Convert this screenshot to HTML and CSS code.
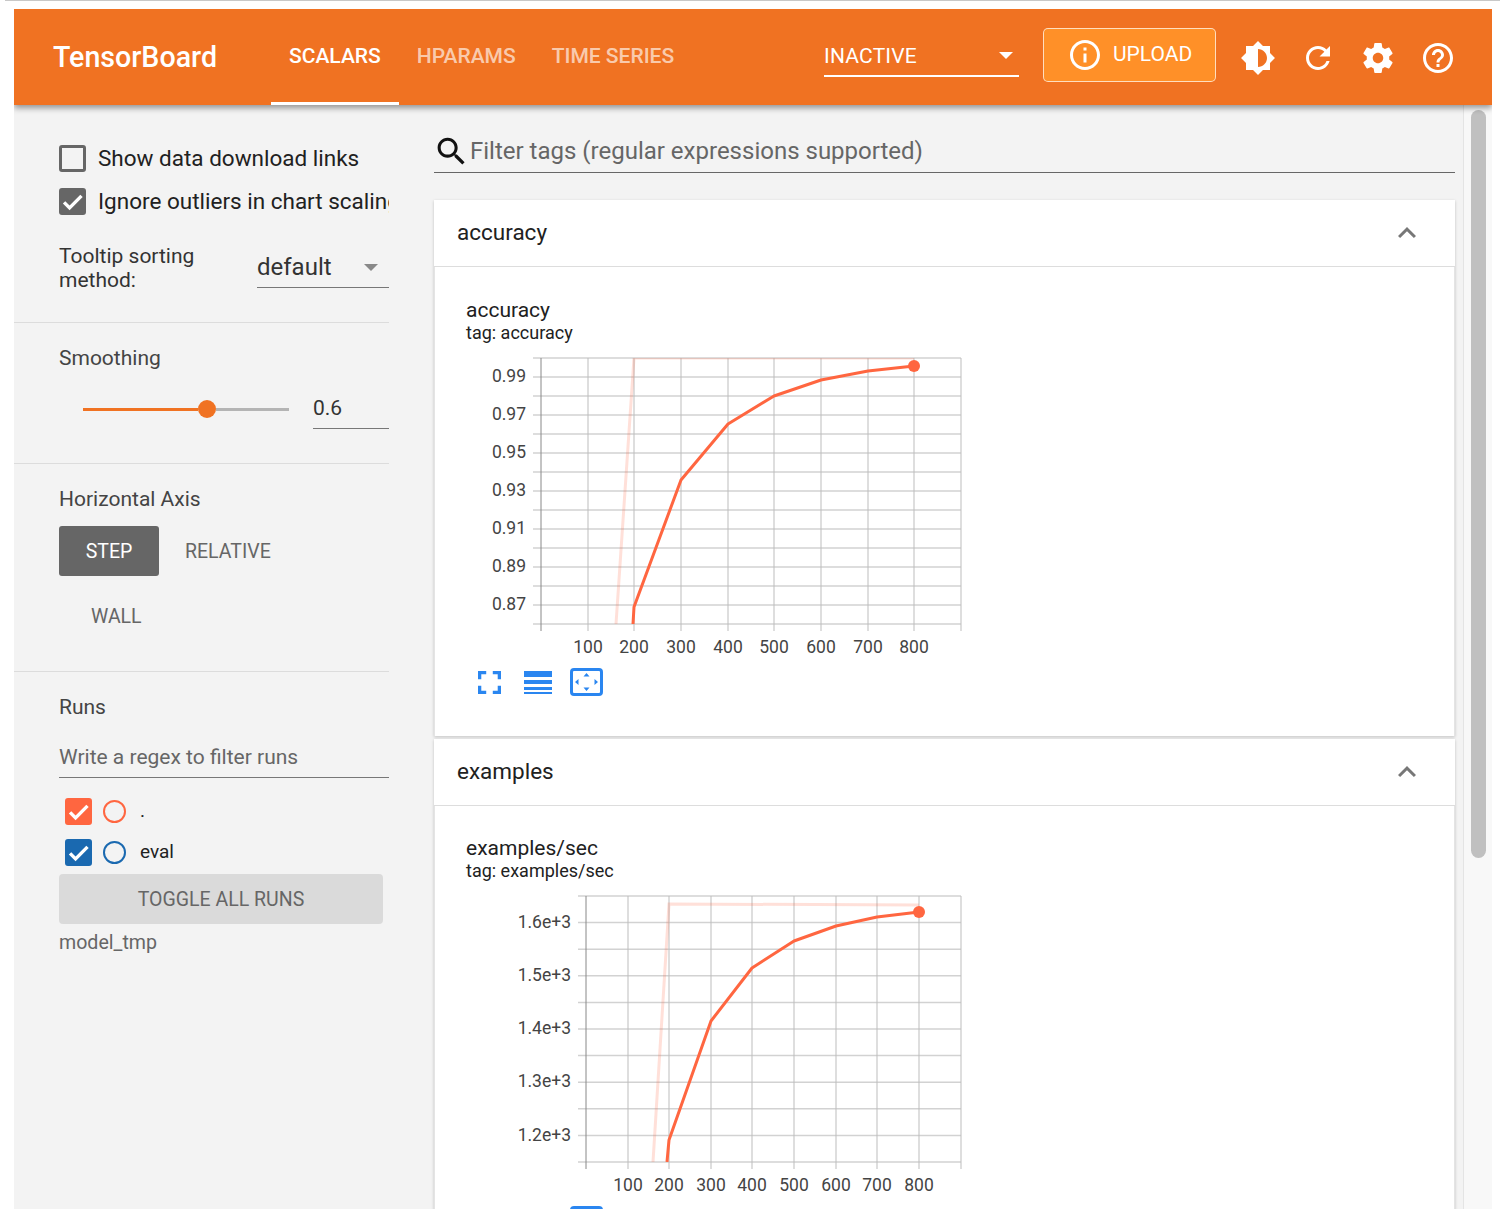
FILE: index.html
```html
<!DOCTYPE html>
<html>
<head>
<meta charset="utf-8">
<title>TensorBoard</title>
<link rel="stylesheet" href="styles.css">
</head>
<body>
<div class="topline"></div>
<div class="frame">
  <header class="topbar">
    <div class="brand">TensorBoard</div>
    <nav class="tabs">
      <a class="tab active">SCALARS</a>
      <a class="tab">HPARAMS</a>
      <a class="tab">TIME SERIES</a>
    </nav>
    <div class="plugin-select">
      <span>INACTIVE</span>
      <i class="caret"></i>
    </div>
    <button class="upload">
      <svg class="icon-36" viewBox="0 0 24 24"><path d="M11 17h2v-6h-2v6zm1-15C6.48 2 2 6.48 2 12s4.48 10 10 10 10-4.48 10-10S17.52 2 12 2zm0 18c-4.41 0-8-3.59-8-8s3.59-8 8-8 8 3.59 8 8-3.59 8-8 8zM11 9h2V7h-2v2z"/></svg>
      <span class="upload-text">UPLOAD</span>
    </button>
    <div class="actions">
      <svg class="icon-36" viewBox="0 0 24 24"><path d="M20 15.31L23.31 12 20 8.69V4h-4.69L12 .69 8.69 4H4v4.69L.69 12 4 15.31V20h4.69L12 23.31 15.31 20H20v-4.69zM12 18V6c3.31 0 6 2.69 6 6s-2.69 6-6 6z"/></svg>
      <svg class="icon-36" viewBox="0 0 24 24"><path d="M17.65 6.35C16.2 4.9 14.21 4 12 4c-4.42 0-7.99 3.58-7.99 8s3.57 8 7.99 8c3.73 0 6.84-2.55 7.73-6h-2.08c-.82 2.33-3.04 4-5.65 4-3.31 0-6-2.69-6-6s2.69-6 6-6c1.66 0 3.14.69 4.22 1.78L13 11h7V4l-2.35 2.35z"/></svg>
      <svg class="icon-36" viewBox="0 0 24 24"><path d="M19.43 12.98c.04-.32.07-.64.07-.98s-.03-.66-.07-.98l2.11-1.65c.19-.15.24-.42.12-.64l-2-3.46c-.12-.22-.39-.3-.61-.22l-2.49 1c-.52-.4-1.08-.73-1.69-.98l-.38-2.65C14.46 2.18 14.25 2 14 2h-4c-.25 0-.46.18-.49.42l-.38 2.65c-.61.25-1.17.59-1.69.98l-2.49-1c-.23-.09-.49 0-.61.22l-2 3.46c-.13.22-.07.49.12.64l2.11 1.65c-.04.32-.07.65-.07.98s.03.66.07.98l-2.11 1.65c-.19.15-.24.42-.12.64l2 3.46c.12.22.39.3.61.22l2.49-1c.52.4 1.08.73 1.69.98l.38 2.65c.03.24.24.42.49.42h4c.25 0 .46-.18.49-.42l.38-2.65c.61-.25 1.17-.59 1.69-.98l2.49 1c.23.09.49 0 .61-.22l2-3.46c.12-.22.07-.49-.12-.64l-2.11-1.65zM12 15.5c-1.93 0-3.5-1.57-3.5-3.5s1.57-3.5 3.5-3.5 3.5 1.57 3.5 3.5-1.57 3.5-3.5 3.5z"/></svg>
      <svg class="icon-36" viewBox="0 0 24 24"><path d="M11 18h2v-2h-2v2zm1-16C6.48 2 2 6.48 2 12s4.48 10 10 10 10-4.48 10-10S17.52 2 12 2zm0 18c-4.41 0-8-3.59-8-8s3.59-8 8-8 8 3.59 8 8-3.59 8-8 8zm0-14c-2.21 0-4 1.79-4 4h2c0-1.1.9-2 2-2s2 .9 2 2c0 2-3 1.75-3 5h2c0-2.25 3-2.5 3-5 0-2.21-1.79-4-4-4z"/></svg>
    </div>
  </header>

  <div class="content">
    <aside class="sidebar">
      <section class="side-section settings">
        <label class="check-row">
          <span class="box"></span>
          <span class="check-label">Show data download links</span>
        </label>
        <label class="check-row">
          <span class="box checked"><svg viewBox="0 0 24 24"><path d="M4.5 12.8l4.9 4.9L20 7"/></svg></span>
          <span class="check-label">Ignore outliers in chart scaling</span>
        </label>
        <div class="sort-row">
          <div class="sort-label">Tooltip sorting method:</div>
          <div class="sort-select"><span>default</span><i class="caret grey"></i></div>
        </div>
      </section>

      <section class="side-section smoothing">
        <div class="side-title">Smoothing</div>
        <div class="slider-row">
          <div class="slider">
            <div class="slider-fill"></div>
            <div class="slider-thumb"></div>
            <div class="slider-rest"></div>
          </div>
          <div class="slider-value">0.6</div>
        </div>
      </section>

      <section class="side-section axis">
        <div class="side-title">Horizontal Axis</div>
        <div class="axis-buttons">
          <button class="axis-btn selected">STEP</button>
          <button class="axis-btn">RELATIVE</button>
          <button class="axis-btn wall">WALL</button>
        </div>
      </section>

      <section class="side-section runs">
        <div class="side-title">Runs</div>
        <div class="runs-filter">Write a regex to filter runs</div>
        <div class="run-list">
          <div class="run">
            <span class="box checked orange"><svg viewBox="0 0 24 24"><path d="M4.5 12.8l4.9 4.9L20 7"/></svg></span>
            <span class="run-dot orange"></span>
            <span class="run-name">.</span>
          </div>
          <div class="run">
            <span class="box checked blue"><svg viewBox="0 0 24 24"><path d="M4.5 12.8l4.9 4.9L20 7"/></svg></span>
            <span class="run-dot blue"></span>
            <span class="run-name">eval</span>
          </div>
        </div>
        <button class="toggle-runs">TOGGLE ALL RUNS</button>
        <div class="logdir">model_tmp</div>
      </section>
    </aside>

    <main class="main">
      <div class="filter">
        <svg class="search-icon" viewBox="0 0 24 24"><path d="M15.5 14h-.79l-.28-.27C15.41 12.59 16 11.11 16 9.5 16 5.91 13.09 3 9.5 3S3 5.91 3 9.5 5.91 16 9.5 16c1.61 0 3.09-.59 4.23-1.57l.27.28v.79l5 4.99L20.49 19l-4.99-5zm-6 0C7.01 14 5 11.99 5 9.5S7.01 5 9.5 5 14 7.01 14 9.5 11.99 14 9.5 14z"/></svg>
        <span>Filter tags (regular expressions supported)</span>
      </div>

      <div class="pane">
        <div class="pane-head">
          <span class="pane-name">accuracy</span>
          <svg class="chevron" viewBox="0 0 24 24"><path d="M12 8l-6 6 1.41 1.41L12 10.83l4.59 4.58L18 14z"/></svg>
        </div>
        <div class="pane-body">
          <div class="chart-title">accuracy</div>
          <div class="chart-tag">tag: accuracy</div>
          <svg class="chart" width="500" height="305" viewBox="0 0 500 305">
            <defs><clipPath id="plot-a"><rect x="67" y="6" width="428" height="266"/></clipPath></defs>
            <path class="grid-h" d="M67 6H495M67 25H495M67 44H495M67 63H495M67 82H495M67 101H495M67 120H495M67 139H495M67 158H495M67 177H495M67 196H495M67 215H495M67 234H495M67 253H495M67 272H495"/>
            <path class="grid-v" d="M122 6V279M168 6V279M215 6V279M262 6V279M308 6V279M355 6V279M402 6V279M448 6V279M495 6V279"/>
            <path class="axis-line" d="M75 6V279"/>
            <g clip-path="url(#plot-a)">
              <polyline class="line-pale" points="150,272 168,6 448,6"/>
              <polyline class="line" points="167,272 168,255 215,128 262,72 308,44 355,28 402,19 448,14"/>
            </g>
            <circle class="dot" cx="448" cy="14" r="6"/>
            <g class="y-labels">
              <text x="60" y="30">0.99</text>
              <text x="60" y="68">0.97</text>
              <text x="60" y="106">0.95</text>
              <text x="60" y="144">0.93</text>
              <text x="60" y="182">0.91</text>
              <text x="60" y="220">0.89</text>
              <text x="60" y="258">0.87</text>
            </g>
            <g class="x-labels">
              <text x="122" y="301">100</text>
              <text x="168" y="301">200</text>
              <text x="215" y="301">300</text>
              <text x="262" y="301">400</text>
              <text x="308" y="301">500</text>
              <text x="355" y="301">600</text>
              <text x="402" y="301">700</text>
              <text x="448" y="301">800</text>
            </g>
          </svg>
          <div class="chart-tools">
            <svg class="tool-full" viewBox="5 5 14 14"><path d="M7 14H5v5h5v-2H7v-3zm-2-4h2V7h3V5H5v5zm12 7h-3v2h5v-5h-2v3zM14 5v2h3v3h2V5h-5z"/></svg>
            <svg class="tool-lines" viewBox="0 0 28 23"><path d="M0 0h28v6H0zM0 9h28v4H0zM0 16h28v3H0zM0 21h28v2H0z"/></svg>
            <svg class="tool-fit" viewBox="0 0 33 28"><rect x="1.5" y="1.5" width="30" height="25" rx="2.5"/><path class="fill" d="M16.5 5l3 3.5h-6zM16.5 23l-3-3.5h6zM5 14l3.5-3v6zM28 14l-3.5 3v-6z"/></svg>
          </div>
        </div>
      </div>

      <div class="pane">
        <div class="pane-head">
          <span class="pane-name">examples</span>
          <svg class="chevron" viewBox="0 0 24 24"><path d="M12 8l-6 6 1.41 1.41L12 10.83l4.59 4.58L18 14z"/></svg>
        </div>
        <div class="pane-body">
          <div class="chart-title">examples/sec</div>
          <div class="chart-tag">tag: examples/sec</div>
          <svg class="chart" width="500" height="305" viewBox="0 0 500 305">
            <defs><clipPath id="plot-b"><rect x="112" y="6" width="383" height="266"/></clipPath></defs>
            <path class="grid-h" d="M112 6H495M112 32.6H495M112 59.2H495M112 85.8H495M112 112.4H495M112 139H495M112 165.6H495M112 192.2H495M112 218.8H495M112 245.4H495M112 272H495"/>
            <path class="grid-v" d="M162 6V279M203 6V279M245 6V279M286 6V279M328 6V279M370 6V279M411 6V279M453 6V279M495 6V279"/>
            <path class="axis-line" d="M120 6V279"/>
            <g clip-path="url(#plot-b)">
              <polyline class="line-pale" points="187,272 203,14 453,15"/>
              <polyline class="line" points="201,272 203,250 245,131 286,78 328,51 370,36 411,27 453,22"/>
            </g>
            <circle class="dot" cx="453" cy="22" r="6"/>
            <g class="y-labels">
              <text x="105" y="38">1.6e+3</text>
              <text x="105" y="91">1.5e+3</text>
              <text x="105" y="144">1.4e+3</text>
              <text x="105" y="197">1.3e+3</text>
              <text x="105" y="251">1.2e+3</text>
            </g>
            <g class="x-labels">
              <text x="162" y="301">100</text>
              <text x="203" y="301">200</text>
              <text x="245" y="301">300</text>
              <text x="286" y="301">400</text>
              <text x="328" y="301">500</text>
              <text x="370" y="301">600</text>
              <text x="411" y="301">700</text>
              <text x="453" y="301">800</text>
            </g>
          </svg>
          <div class="chart-tools">
            <svg class="tool-full" viewBox="5 5 14 14"><path d="M7 14H5v5h5v-2H7v-3zm-2-4h2V7h3V5H5v5zm12 7h-3v2h5v-5h-2v3zM14 5v2h3v3h2V5h-5z"/></svg>
            <svg class="tool-lines" viewBox="0 0 28 23"><path d="M0 0h28v6H0zM0 9h28v4H0zM0 16h28v3H0zM0 21h28v2H0z"/></svg>
            <svg class="tool-fit" viewBox="0 0 33 28"><rect x="1.5" y="1.5" width="30" height="25" rx="2.5"/><path class="fill" d="M16.5 5l3 3.5h-6zM16.5 23l-3-3.5h6zM5 14l3.5-3v6zM28 14l-3.5 3v-6z"/></svg>
          </div>
        </div>
      </div>
    </main>

    <div class="scrollbar"><div class="scroll-thumb"></div></div>
  </div>
</div>
</body>
</html>
```

FILE: styles.css
```css
* {
  box-sizing: border-box;
}

body {
  margin: 0;
  height: 1228px;
  background: #fff;
  font-family: Roboto, "Liberation Sans", sans-serif;
  color: #212121;
  overflow: hidden;
}

button {
  font-family: inherit;
  border: none;
}

.topline {
  height: 1px;
  margin-left: 5px;
  background: #c8c8c8;
}

.frame {
  display: flex;
  flex-direction: column;
  height: 1200px;
  margin: 8px 8px 0 14px;
  overflow: hidden;
  background: #f3f3f3;
}

/* top bar */
.topbar {
  position: relative;
  z-index: 2;
  display: flex;
  align-items: center;
  flex: 0 0 96px;
  padding: 0 24px 0 39px;
  background: #f07222;
  color: #fff;
  box-shadow: 0 3px 6px rgba(0, 0, 0, .4);
}

.brand {
  width: 218px;
  font-size: 28.6px;
  font-weight: 500;
  margin-top: -1px;
}

.tabs {
  display: flex;
  align-self: stretch;
  width: 553px;
}

.tab {
  display: flex;
  align-items: center;
  padding: 0 18px;
  border-bottom: 3px solid transparent;
  font-size: 21px;
  font-weight: 500;
  color: rgba(255, 255, 255, .65);
}

.tab.active {
  color: #fff;
  border-bottom-color: #fff;
}

.plugin-select {
  display: flex;
  align-items: center;
  justify-content: space-between;
  width: 195px;
  height: 40px;
  margin-top: -1px;
  border-bottom: 2px solid #fff;
  font-size: 21px;
  letter-spacing: .2px;
  padding-right: 6px;
}

.caret {
  width: 0;
  height: 0;
  border-left: 7.5px solid transparent;
  border-right: 7.5px solid transparent;
  border-top: 7.5px solid #fff;
}

.caret.grey {
  border-top-color: #888;
}

.upload {
  display: flex;
  align-items: center;
  gap: 10px;
  width: 173px;
  height: 54px;
  margin: -4px 12px 0 24px;
  padding: 0 0 0 23px;
  background: #ff9028;
  border: 1px solid rgba(255, 255, 255, .7);
  border-radius: 5px;
  color: #fff;
  font-size: 21px;
}

.upload-text {
  margin-top: -2px;
}

.icon-36 {
  width: 36px;
  height: 36px;
  fill: #fff;
  flex: none;
}

.actions {
  display: flex;
  gap: 24px;
  margin-left: auto;
  padding: 0 12px;
  margin-top: 2px;
}

/* content row */
.content {
  display: flex;
  flex: 1;
  min-height: 0;
}

.sidebar {
  flex: 0 0 420px;
}

.side-section {
  width: 375px;
  padding-left: 45px;
  border-bottom: 1px solid #dcdcdc;
  overflow: hidden;
}

.side-title {
  font-size: 21px;
  line-height: 24px;
  color: #444;
}

.settings {
  height: 218px;
  padding-top: 40px;
}

.check-row {
  display: flex;
  align-items: center;
  height: 27px;
  margin-bottom: 16px;
  white-space: nowrap;
}

.box {
  display: block;
  flex: none;
  width: 27px;
  height: 27px;
  border: 3px solid #666;
  border-radius: 3px;
}

.box svg {
  display: block;
  width: 27px;
  height: 27px;
  margin: -3px;
  fill: none;
  stroke: #fff;
  stroke-width: 3;
}

.box.checked {
  background: #666;
}

.box.orange {
  background: #ff6640;
  border-color: #ff6640;
}

.box.blue {
  background: #1a69b0;
  border-color: #1a69b0;
}

.check-label {
  margin: -2px 0 0 12px;
  font-size: 22.5px;
}

.sort-row {
  display: flex;
  align-items: flex-start;
  margin-top: 29px;
}

.sort-label {
  width: 198px;
  padding-right: 30px;
  font-size: 21px;
  line-height: 24px;
  color: #333;
}

.sort-select {
  display: flex;
  align-items: center;
  justify-content: space-between;
  width: 132px;
  height: 44px;
  padding: 3px 11px 0 0;
  border-bottom: 1px solid #777;
  font-size: 24px;
  color: #333;
}

.smoothing {
  height: 141px;
  padding-top: 23px;
}

.slider-row {
  display: flex;
  align-items: center;
  height: 39px;
  margin-top: 20px;
}

.slider {
  display: flex;
  align-items: center;
  width: 206px;
  margin: -1px 0 0 24px;
}

.slider-fill {
  width: 115px;
  height: 3px;
  background: #f07222;
}

.slider-thumb {
  flex: none;
  width: 18px;
  height: 18px;
  border-radius: 50%;
  background: #f07222;
}

.slider-rest {
  flex: 1;
  height: 3px;
  background: #b4b4b4;
}

.slider-value {
  width: 76px;
  height: 39px;
  margin-left: 24px;
  border-bottom: 1px solid #777;
  font-size: 21px;
  line-height: 37px;
  color: #333;
}

.axis {
  height: 208px;
  padding-top: 23px;
}

.axis-buttons {
  display: flex;
  flex-wrap: wrap;
  gap: 15px 0;
  margin-top: 15px;
}

.axis-btn {
  height: 50px;
  padding: 0 26px;
  background: none;
  border-radius: 3px;
  font-size: 19.5px;
  color: #666;
}

.axis-btn.selected {
  width: 100px;
  padding: 0;
  background: #666;
  color: #fff;
}

.axis-btn.wall {
  margin-left: 6px;
}

.runs {
  padding-top: 23px;
  border-bottom: none;
}

.runs-filter {
  height: 40px;
  margin-top: 19px;
  border-bottom: 1px solid #777;
  font-size: 21px;
  line-height: 38px;
  color: #666;
}

.run-list {
  display: flex;
  flex-direction: column;
  gap: 14px;
  margin-top: 20px;
  padding-left: 6px;
}

.run {
  display: flex;
  align-items: center;
  height: 27px;
}

.run-dot {
  width: 23px;
  height: 23px;
  margin-left: 11px;
  border: 2px solid;
  border-radius: 50%;
}

.run-dot.orange {
  border-color: #ff6640;
}

.run-dot.blue {
  border-color: #1a69b0;
}

.run-name {
  margin: -2px 0 0 14px;
  font-size: 19px;
}

.toggle-runs {
  display: block;
  width: 324px;
  height: 50px;
  margin-top: 8px;
  background: #dadada;
  border-radius: 4px;
  font-size: 19.5px;
  color: #666;
}

.logdir {
  margin-top: 7px;
  font-size: 19.6px;
  line-height: 24px;
  color: #666;
}

/* main column */
.main {
  flex: 0 0 1021px;
  min-width: 0;
}

.filter {
  display: flex;
  align-items: center;
  gap: 0;
  height: 68px;
  padding-top: 25px;
  border-bottom: 1px solid #666;
  font-size: 24px;
  color: #666;
}

.search-icon {
  width: 37px;
  height: 37px;
  margin-left: -1px;
  fill: #111;
  flex: none;
}

.pane {
  margin-top: 3px;
  background: #fff;
  box-shadow: 0 1px 3px rgba(0, 0, 0, .2);
}

.filter + .pane {
  margin-top: 27px;
}

.pane-head {
  display: flex;
  align-items: center;
  justify-content: space-between;
  height: 67px;
  padding: 0 30px 0 23px;
  border-bottom: 1px solid #ddd;
  font-size: 22.5px;
}

.pane-name {
  margin-top: -2px;
}

.chevron {
  width: 36px;
  height: 36px;
  fill: #777;
}

.pane-body {
  height: 469px;
  padding: 31px 0 0 31px;
  border: 0 solid #e4e4e4;
  border-width: 0 1px;
}

.pane + .pane .pane-body {
  padding-top: 30px;
}

.chart-title {
  font-size: 21px;
  line-height: 24px;
}

.chart-tag {
  font-size: 18px;
  line-height: 22px;
}

.chart {
  display: block;
  margin-top: 8px;
}

.grid-h {
  fill: none;
  stroke: #d2d2d2;
  stroke-width: 1.5;
}

.grid-v {
  fill: none;
  stroke: #bdbdbd;
  stroke-width: 1;
}

.axis-line {
  fill: none;
  stroke: #888;
  stroke-width: 1;
}

.line {
  fill: none;
  stroke: #ff6640;
  stroke-width: 3;
  stroke-linejoin: round;
}

.line-pale {
  fill: none;
  stroke: #ff6640;
  stroke-opacity: .2;
  stroke-width: 3;
}

.dot {
  fill: #ff6640;
}

.y-labels,
.x-labels {
  font-size: 17.5px;
  fill: #444;
}

.y-labels {
  text-anchor: end;
}

.x-labels {
  text-anchor: middle;
}

.chart-tools {
  display: flex;
  align-items: center;
  gap: 18px;
  height: 28px;
  margin-top: 11px;
  padding-left: 12px;
}

.tool-full {
  width: 23px;
  height: 23px;
  fill: #2a86f0;
}

.tool-lines {
  width: 28px;
  height: 23px;
  fill: #2a86f0;
  margin-left: 5px;
}

.tool-fit {
  width: 33px;
  height: 28px;
  fill: none;
  stroke: #2a86f0;
  stroke-width: 3;
}

.tool-fit .fill {
  fill: #2a86f0;
  stroke: none;
}

/* page scrollbar */
.scrollbar {
  flex: 0 0 29px;
  margin-left: 8px;
  padding: 5px 6px 0 7px;
  background: #f8f8f8;
  border-left: 1px solid #e4e4e4;
}

.scroll-thumb {
  height: 748px;
  background: #c0c0c0;
  border-radius: 8px;
}
```
